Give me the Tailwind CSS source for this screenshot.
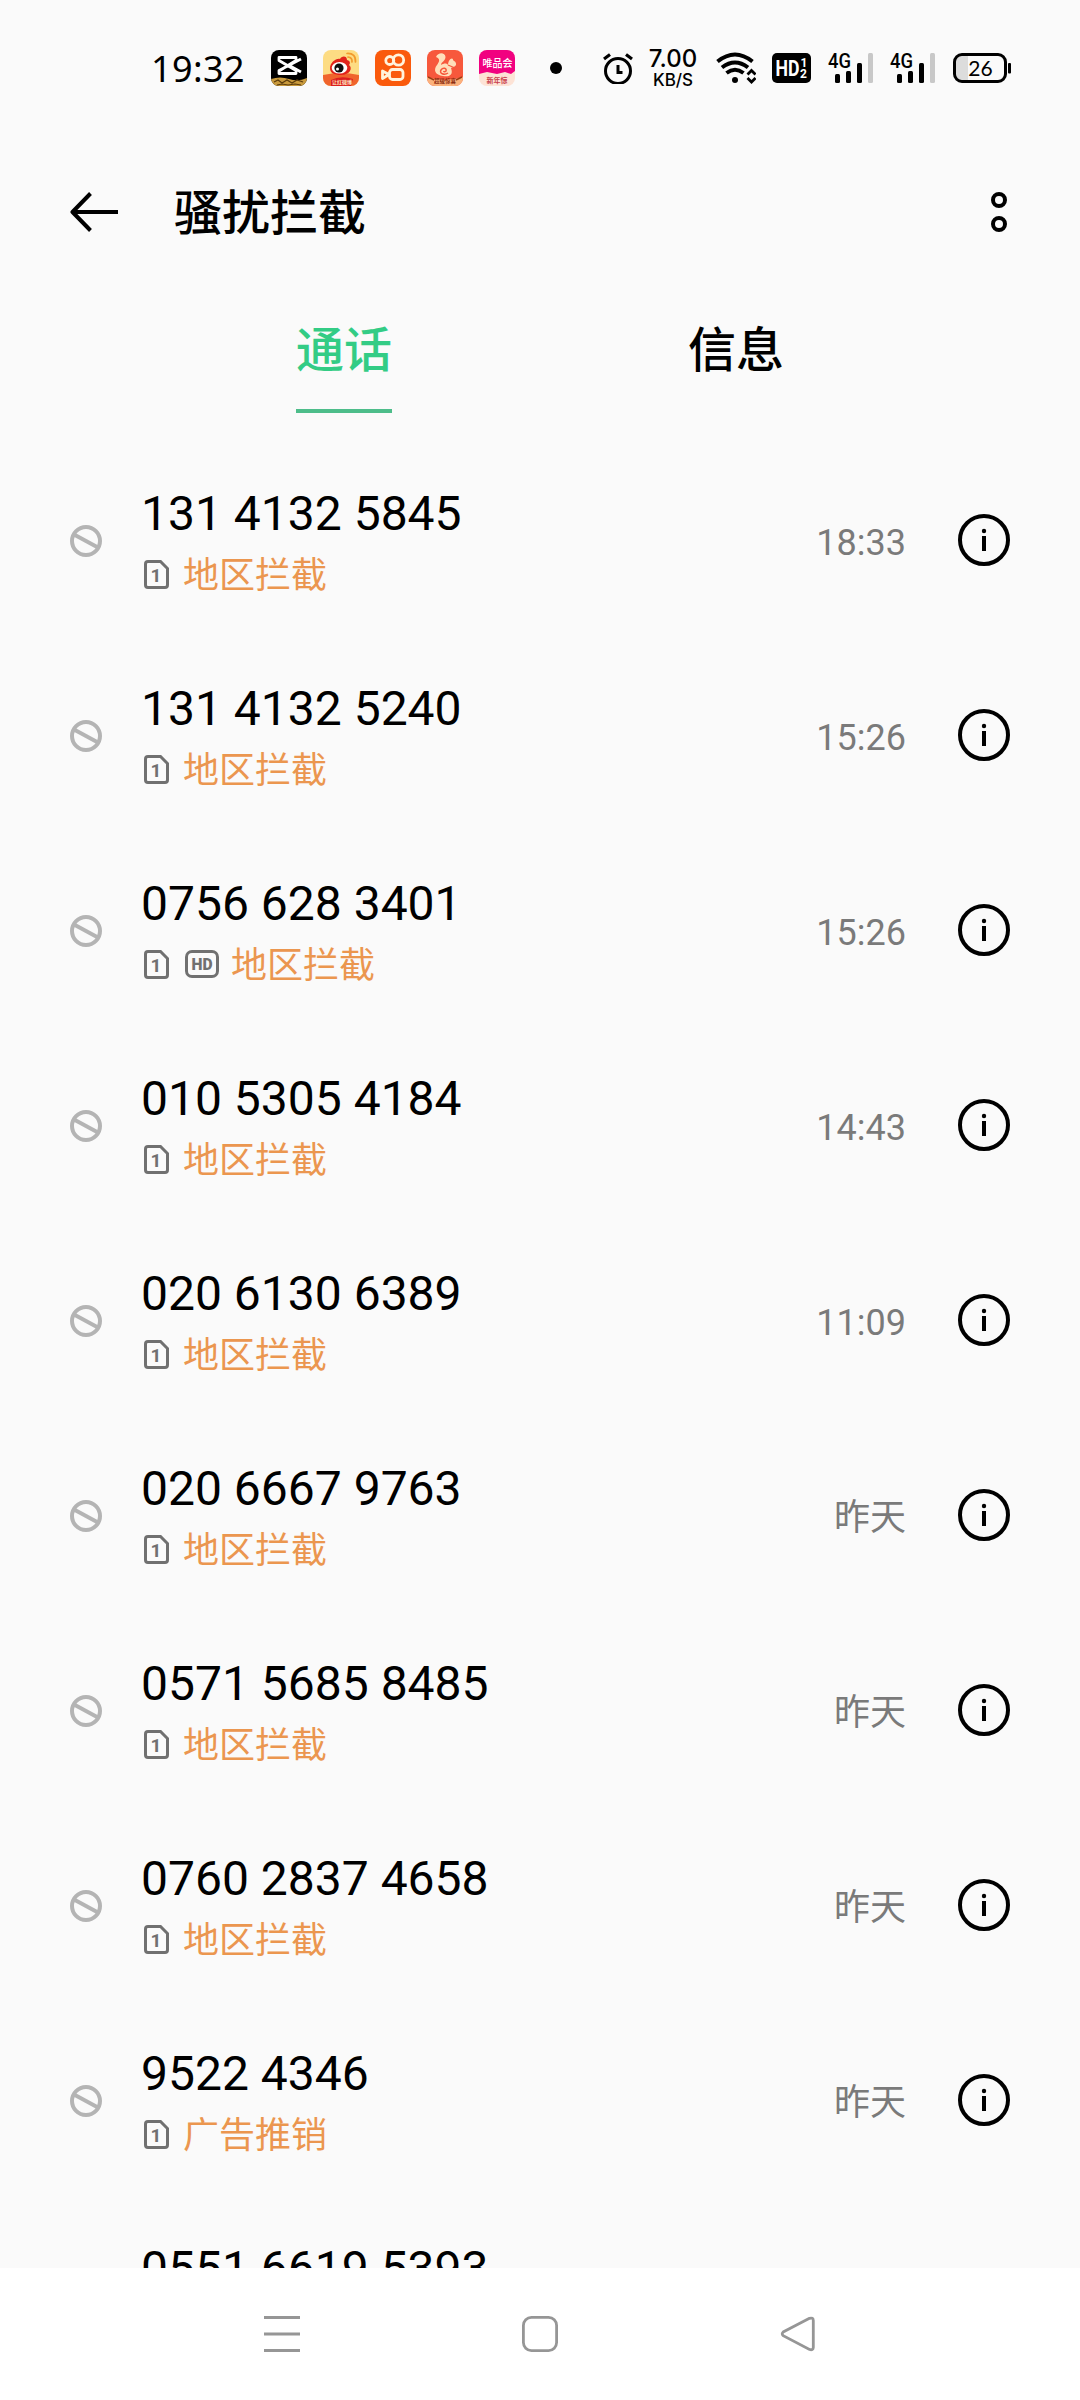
<!DOCTYPE html>
<html lang="zh-CN">
<head>
    <meta charset="UTF-8">
    <meta name="viewport" content="width=device-width, initial-scale=1.0">
    <title>骚扰拦截</title>
    <script src="https://cdn.jsdelivr.net/npm/@tailwindcss/browser@4"></script>
</head>
<body class="bg-[#fafafa]">
    <div class="w-[1080px] h-[2400px] flex flex-col overflow-hidden bg-[#fafafa] text-black font-['Roboto','Noto_Sans_CJK_SC',sans-serif]">

        <!-- status bar -->
        <div class="h-[136px] shrink-0 flex items-center pl-[151px]">
            <span class="w-[120px] pt-px text-[36px] leading-[48px] tracking-[0.4px] font-normal font-['Noto_Sans',sans-serif]">19:32</span>

            <div class="flex gap-4">
                <svg class="w-9 h-9" viewBox="0 0 36 36">
                    <clipPath id="r"><rect width="36" height="36" rx="8"/></clipPath>
                    <g clip-path="url(#r)">
                        <rect width="36" height="36" fill="#000"/>
                        <path d="M0 29Q9 26 18 29T36 28V36H0Z" fill="#c99a3c"/>
                        <path d="M3 32l4-2 4 3 5-3 5 3 5-3 6 2M6 35l5-1 6 1 7-1 6 1" stroke="#5c3c0c" stroke-width="1.2" fill="none"/>
                        <path d="M30 9L8 20.500V23.500H25V20.500L8 10.500V7.500H25V10.500L8 21M20 16.500L30 22" stroke="#fff" stroke-width="2.800" fill="none" stroke-linejoin="round"/>
                    </g>
                </svg>
                <svg class="w-9 h-9" viewBox="0 0 36 36">
                    <g clip-path="url(#r)">
                        <rect width="36" height="36" fill="#fddc83"/>
                        <path d="M0 25Q18 21 36 25V36H0Z" fill="#f0642c"/>
                        <path d="M8 30Q18 25 30 29L28 36H8Z" fill="#dc1e1e"/>
                        <path d="M7 18C7 13 13 8 17 9C18 6 24 5 24 10C28 11 27 14 26 15C30 18 27 25 18 25C11 25 7 23 7 18Z" fill="#e2231a"/>
                        <ellipse cx="16.500" cy="17.800" rx="7.800" ry="5.800" fill="#fff"/>
                        <circle cx="16" cy="18" r="4.600" fill="#111"/>
                        <circle cx="14.500" cy="19" r="1.500" fill="#fff"/>
                        <path d="M25 7Q29.500 7.500 29 12M24 3.500Q33 3 32.500 12" stroke="#f29a2c" stroke-width="1.700" fill="none" stroke-linecap="round"/>
                        <text x="19" y="33.500" text-anchor="middle" font-size="5" font-weight="700" fill="#ffe9c4">让红微博</text>
                    </g>
                </svg>
                <svg class="w-9 h-9" viewBox="0 0 36 36">
                    <rect width="36" height="36" rx="8" fill="#fa5a0c"/>
                    <g fill="none" stroke="#fff3dc" stroke-width="2.800" stroke-linejoin="round">
                        <circle cx="14.800" cy="10.500" r="4"/>
                        <circle cx="23.500" cy="10" r="5.200"/>
                        <rect x="14.500" y="19.500" width="13.500" height="10" rx="3"/>
                        <path d="M14 24.500L7.500 21V28.500Z"/>
                    </g>
                </svg>
                <svg class="w-9 h-9" viewBox="0 0 36 36">
                    <g clip-path="url(#r)">
                        <rect width="36" height="36" fill="#f7583c"/>
                        <path d="M0 27Q18 33 36 27V36H0Z" fill="#fbb27c"/>
                        <path d="M9 7C11 2 18 2 18.500 7C18.500 11 14 12 14 15C17 13 20 13 21 15C21 11 24 7 26 9C25 11 30 11 29 15C28 17 25 17 24 18C27 26 21 27 16 26C8 25 6 20 10 15C12 12 14 9 9 7Z" fill="#ffdfba"/>
                        <path d="M21 23C17 26 12 23 14 20C16 17 20 18 19 21C18 22 17 22 16.500 21" stroke="#f7583c" stroke-width="1.500" fill="none"/>
                        <path d="M21 15L28 18" stroke="#f7583c" stroke-width="1.300"/>
                        <path d="M1 27l6 3M35 27l-6 3" stroke="#9c3c14" stroke-width="1.500"/>
                        <text x="18" y="33" text-anchor="middle" font-size="5.500" font-weight="700" fill="#8c2c10">超级惊喜</text>
                    </g>
                </svg>
                <svg class="w-9 h-9" viewBox="0 0 36 36">
                    <g clip-path="url(#r)">
                        <rect width="36" height="36" fill="#fde3d6"/>
                        <path d="M0 0H36V21L32 24L26 22L18 24L8 22L0 24Z" fill="#f10180"/>
                        <text x="18.500" y="17" text-anchor="middle" font-size="10" font-weight="500" fill="#fff">唯品会</text>
                        <text x="18" y="32.500" text-anchor="middle" font-size="7" font-weight="700" fill="#c8404c">新年惊</text>
                    </g>
                </svg>
            </div>

            <div class="w-3 h-3 rounded-full bg-black ml-[35px]"></div>

            <svg class="w-8 h-8 ml-10" viewBox="0 0 32 32" fill="none" stroke="#000">
                <circle cx="16" cy="19" r="12.500" stroke-width="3"/>
                <path d="M16 13V20.500H20.500" stroke-width="3"/>
                <path d="M2 7L8 2.500M30 7L24 2.500" stroke-width="3.200"/>
            </svg>

            <div class="w-[52px] ml-[13px] mr-px flex flex-col items-center font-['Inter',sans-serif]">
                <span class="text-[24px] leading-[24px] font-medium whitespace-nowrap">7.00</span>
                <span class="text-[17px] leading-[18px] font-medium whitespace-nowrap">KB/S</span>
            </div>

            <svg class="w-10 h-8 ml-[16px]" viewBox="0 0 40 32" fill="none" stroke="#000">
                <path d="M1.500 9.500Q19 -4.500 36.500 9.500" stroke-width="4"/>
                <path d="M6 15.500Q19 5.500 32 15.500" stroke-width="4"/>
                <path d="M10.500 21Q19 14.500 27.500 21" stroke-width="4"/>
                <circle cx="19" cy="28" r="3" fill="#000" stroke="none"/>
                <path d="M31.500 22.500L35.500 18.500L39.500 22.500M31.500 26L35.500 30L39.500 26" stroke-width="2.800"/>
            </svg>

            <svg class="w-[39px] h-[30px] ml-[16px]" viewBox="0 0 39 30">
                <rect width="39" height="30" rx="5" fill="#000"/>
                <g fill="#fff" font-weight="700">
                    <text x="3.500" y="23" font-size="22" textLength="24" lengthAdjust="spacingAndGlyphs">HD</text>
                    <text x="28.500" y="13.500" font-size="12">1</text>
                    <text x="28" y="25" font-size="12">2</text>
                </g>
            </svg>

            <svg class="w-[46px] h-[30px] ml-[17px] overflow-visible" viewBox="0 0 46 30">
                <text x="0" y="14.500" font-size="20" font-weight="500" textLength="23" lengthAdjust="spacingAndGlyphs">4G</text>
                <rect x="7" y="21" width="5" height="9" rx="1.500"/>
                <rect x="18" y="18" width="5" height="12" rx="1.500"/>
                <rect x="29" y="10" width="5" height="20" rx="1.500"/>
                <rect x="40" y="0" width="5" height="30" rx="1.500" fill="#c8c8c8"/>
            </svg>
            <svg class="w-[46px] h-[30px] ml-4 overflow-visible" viewBox="0 0 46 30">
                <text x="0" y="14.500" font-size="20" font-weight="500" textLength="23" lengthAdjust="spacingAndGlyphs">4G</text>
                <rect x="7" y="21" width="5" height="9" rx="1.500"/>
                <rect x="18" y="18" width="5" height="12" rx="1.500"/>
                <rect x="29" y="10" width="5" height="20" rx="1.500"/>
                <rect x="40" y="0" width="5" height="30" rx="1.500" fill="#c8c8c8"/>
            </svg>

            <svg class="w-[58px] h-[30px] ml-[17px]" viewBox="0 0 58 30">
                <path d="M10 3H15V27H10Q3 27 3 20V10Q3 3 10 3Z" fill="#dcdcdc"/>
                <rect x="1.500" y="1.500" width="51" height="27" rx="7.500" fill="none" stroke="#000" stroke-width="3"/>
                <rect x="55" y="10" width="3" height="10.500" rx="1"/>
                <text x="27.500" y="22.800" text-anchor="middle" font-size="21" font-family="Lato">26</text>
            </svg>
        </div>

        <!-- title -->
        <div class="h-[152px] shrink-0 flex items-center pl-[70px] pr-[73px]">
            <svg class="w-12 h-10" viewBox="0 0 48 40" fill="none" stroke="#000" stroke-width="4">
                <path d="M20.500 1.500L2.500 20L20.500 38.500M2.500 20H48" stroke-linejoin="round"/>
            </svg>
            <h1 class="ml-14 pt-1 text-[48px] leading-[64px] font-medium">骚扰拦截</h1>
            <svg class="w-4 h-10 ml-auto" viewBox="0 0 16 40" fill="none" stroke="#000" stroke-width="4">
                <circle cx="8" cy="8" r="6"/>
                <circle cx="8" cy="32" r="6"/>
            </svg>
        </div>

        <!-- tabs -->
        <div class="h-[155px] shrink-0 flex gap-[296px] pl-[296px] pt-[31px] text-[48px] leading-[64px] font-medium">
            <div class="flex flex-col w-24 text-[#33cc85]">
                <span>通话</span>
                <span class="mt-[26px] h-1 bg-[#4dbd8a]"></span>
            </div>
            <div class="w-24">信息</div>
        </div>

        <!-- blocked calls -->
        <div id="callList" class="h-[1825px] shrink-0 overflow-hidden"></div>

        <!-- navigation bar -->
        <div class="h-[132px] shrink-0 bg-white flex items-center pl-[264px] gap-[222px]">
            <svg class="w-9 h-9" viewBox="0 0 36 36" fill="none" stroke="#969696" stroke-width="3">
                <path d="M0 1.500H36M0 18H36M0 34.500H36"/>
            </svg>
            <svg class="w-9 h-9" viewBox="0 0 36 36" fill="none" stroke="#969696" stroke-width="2.800">
                <rect x="1.400" y="1.400" width="33.200" height="33.200" rx="8"/>
            </svg>
            <svg class="w-9 h-9" viewBox="0 0 36 36" fill="none" stroke="#969696" stroke-width="2.800">
                <path d="M29.500 2.300L3.200 15.900Q1.200 17.800 3.200 19.700L29.500 33.500Q33.200 34.500 33.300 31.500V4.500Q33.200 1.200 29.500 2.300Z"/>
            </svg>
        </div>
    </div>

    <script>
        const calls = [
            { number: '131 4132 5845', tag: '地区拦截', time: '18:33' },
            { number: '131 4132 5240', tag: '地区拦截', time: '15:26' },
            { number: '0756 628 3401', tag: '地区拦截', time: '15:26', hd: true },
            { number: '010 5305 4184', tag: '地区拦截', time: '14:43' },
            { number: '020 6130 6389', tag: '地区拦截', time: '11:09' },
            { number: '020 6667 9763', tag: '地区拦截', time: '昨天' },
            { number: '0571 5685 8485', tag: '地区拦截', time: '昨天' },
            { number: '0760 2837 4658', tag: '地区拦截', time: '昨天' },
            { number: '9522 4346', tag: '广告推销', time: '昨天' },
            { number: '0551 6619 5393', tag: '地区拦截', time: '昨天' }
        ];

        const hdIcon = `
            <svg class="w-[34px] h-[28px] ml-[2px] mr-[12px]" viewBox="0 0 34 28">
                <rect x="1.500" y="1.500" width="31" height="25" rx="5.500" fill="none" stroke="#707070" stroke-width="3"/>
                <text x="17" y="20" text-anchor="middle" font-size="16.500" font-weight="900" fill="#707070" textLength="21" lengthAdjust="spacingAndGlyphs">HD</text>
            </svg>`;

        document.getElementById('callList').innerHTML = calls.map(call => `
            <div class="h-[195px] flex pl-[70px] pr-[70px]">
                <svg class="w-8 h-8 mt-[82px]" viewBox="0 0 32 32" fill="none" stroke="#b4b4b4" stroke-width="4">
                    <circle cx="16" cy="16" r="14"/>
                    <path d="M4 9.500L28 22.500"/>
                </svg>
                <div class="ml-[39px] pt-[43px]">
                    <div class="text-[48px] leading-[56px] whitespace-nowrap">${call.number}</div>
                    <div class="mt-[7px] flex items-center pl-[3px]">
                        <svg class="w-[25px] h-[29px] mr-[14px]" viewBox="0 0 25 29">
                            <path d="M4 1.500H16.500L23.500 8.500V25Q23.500 27.500 21 27.500H4Q1.500 27.500 1.500 25V4Q1.500 1.500 4 1.500Z" fill="none" stroke="#707070" stroke-width="3"/>
                            <text x="12" y="21.500" text-anchor="middle" font-size="19" font-weight="700" fill="#707070">1</text>
                        </svg>
                        ${call.hd ? hdIcon : ''}
                        <span class="pt-[3px] -mb-px text-[36px] leading-[48px] text-[#eb964f]">${call.tag}</span>
                    </div>
                </div>
                <div class="ml-auto mt-[76px] text-[36px] leading-[48px] text-[#7a7a7a]">${call.time}</div>
                <svg class="w-[52px] h-[52px] ml-[52px] mt-[71px]" viewBox="0 0 52 52">
                    <circle cx="26" cy="26" r="24" fill="none" stroke="#000" stroke-width="4"/>
                    <circle cx="26" cy="17" r="2.200"/>
                    <rect x="24" y="22" width="4" height="15"/>
                </svg>
            </div>`).join('');
    </script>
</body>
</html>
